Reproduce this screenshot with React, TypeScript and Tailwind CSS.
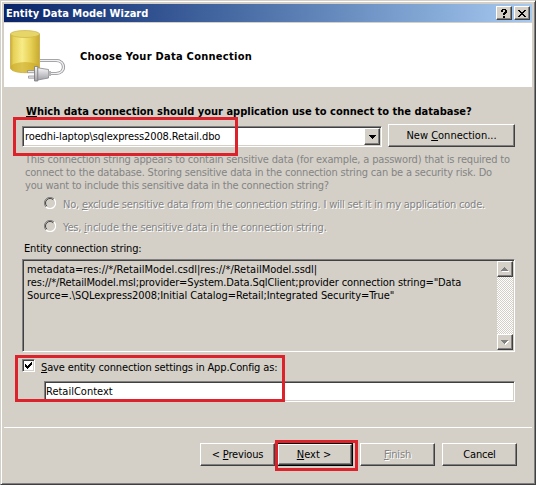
import type { ReactNode } from "react";

const raised =
  "border border-t-white border-l-white border-r-[#404040] border-b-[#404040] shadow-[inset_-1px_-1px_0_#808080] bg-[#d4d0c8]";
const sunken =
  "border border-t-[#808080] border-l-[#808080] border-r-white border-b-white shadow-[inset_1px_1px_0_#404040,inset_-1px_-1px_0_#d4d0c8]";
const etched = "text-[#848484] [text-shadow:1px_1px_0_#fff]";

function Key({ children }: { children: ReactNode }) {
  return <span className="underline decoration-1 underline-offset-1 [text-decoration-skip-ink:none]">{children}</span>;
}

function PushButton({ children, className = "" }: { children: ReactNode; className?: string }) {
  return (
    <button className={`flex h-[23px] shrink-0 items-center justify-center whitespace-nowrap leading-[13px] ${raised} ${className}`}>
      {children}
    </button>
  );
}

function Radio({ children, className = "" }: { children: ReactNode; className?: string }) {
  return (
    <label className="flex h-[13px]">
      <svg width="12" height="12" viewBox="0 0 12 12" fill="none" className="mr-[7px] shrink-0">
        <path d="M10 2A5.5 5.5 0 0 0 2 10" stroke="#808080" />
        <path d="M9.3 2.8A4.5 4.5 0 0 0 2.8 9.2" stroke="#404040" />
        <path d="M10 2A5.5 5.5 0 0 1 2 10" stroke="#fff" strokeWidth="1.2" />
      </svg>
      <span className={`mt-px whitespace-nowrap ${etched} ${className}`}>{children}</span>
    </label>
  );
}

function DatabasePlug() {
  return (
    <svg width="62" height="56" viewBox="0 0 62 56" fill="none">
      <defs>
        <linearGradient id="body" x1="0" x2="1">
          <stop offset="0" stopColor="#c9ac34" />
          <stop offset=".1" stopColor="#e6d056" />
          <stop offset=".4" stopColor="#f8ec88" />
          <stop offset=".7" stopColor="#e6d054" />
          <stop offset="1" stopColor="#c8a930" />
        </linearGradient>
        <linearGradient id="plug" x1="0" y1="0" x2="0" y2="1">
          <stop offset="0" stopColor="#f6f6f8" />
          <stop offset="1" stopColor="#a2a2a8" />
        </linearGradient>
      </defs>
      <path d="M5.5 5v34c0 2.700 6.500 4.700 14.500 4.700S34.500 41.700 34.500 39V5z" fill="url(#body)" stroke="#c2a43a" strokeWidth=".7" />
      <ellipse cx="20" cy="38.300" rx="14.300" ry="5.200" fill="#c9a828" opacity=".6" />
      <ellipse cx="20" cy="5" rx="14.500" ry="3.500" fill="#e6d568" stroke="#cdb345" strokeWidth=".7" />
      <path d="M35 31.500h16c10 0 10 13 0 13h-6" stroke="#8d8d92" strokeWidth="3.200" />
      <path d="M35 31.500h16c10 0 10 13 0 13h-6" stroke="#f1f1f1" strokeWidth="1.600" />
      <path d="M22.500 41.500h7v2.200h-7zM23.500 47h6.500v2.200h-6.500z" fill="#e5e5e8" stroke="#88888d" strokeWidth=".7" />
      <path d="M29.500 37.500h3.300v14.500h-3.300z" fill="url(#plug)" stroke="#77777b" strokeWidth=".8" />
      <path d="M32.800 38.800l10.700 1.700v8.500l-10.700 2z" fill="url(#plug)" stroke="#85858a" strokeWidth=".8" />
      <path d="M43.500 42h2.500v5h-2.500z" fill="#b5b5b8" />
    </svg>
  );
}

export default function App() {
  return (
    <div className="relative h-[485px] w-[536px] overflow-hidden bg-[#d4d0c8] font-['DejaVu_Sans_Condensed','DejaVu_Sans',sans-serif] text-[11px] leading-[13px] text-black [font-stretch:condensed]">
      <div className="flex h-full flex-col border border-t-[#d4d0c8] border-l-[#d4d0c8] border-r-[#404040] border-b-[#404040] p-[3px] shadow-[inset_1px_1px_0_#fff,inset_-1px_-1px_0_#808080]">
        <header className="flex h-[18px] w-[528px] shrink-0 items-center bg-linear-to-r from-[#0a246a] to-[#a6caf0] pr-[2px] pl-[2px]">
          <h1 className="grow whitespace-nowrap font-bold text-white">Entity Data Model Wizard</h1>
          <button className={`mr-[2px] flex h-[14px] w-4 items-center justify-center ${raised}`}>
            <svg width="8" height="9" viewBox="0 0 8 9" shapeRendering="crispEdges">
              <path d="M2 0h4v1h1v3H6v1H5v1H3V4h1V3h1V1H3v2H1V1h1zM3 7h2v2H3z" />
            </svg>
          </button>
          <button className={`flex h-[14px] w-4 items-center justify-center ${raised}`}>
            <svg width="8" height="7" viewBox="0 0 8 7" shapeRendering="crispEdges">
              <path d="M0 0h2v1h1v1h2V1h1V0h2v1H7v1H6v1H5v1h1v1h1v1h1v1H6V6H5V5H3v1H2v1H0V6h1V5h1V4h1V3H2V2H1V1H0z" />
            </svg>
          </button>
        </header>

        <section className="mt-px flex h-16 w-[528px] shrink-0 bg-white pt-[6px] pl-[1px]">
          <DatabasePlug />
          <h2 className="mt-[21px] ml-[13px] whitespace-nowrap font-bold tracking-[0.27px]">Choose Your Data Connection</h2>
        </section>

        <main className="flex h-[339px] shrink-0 flex-col pt-[18px] pl-[18px]">
          <p className="ml-[4px] whitespace-nowrap font-bold"><Key>W</Key>hich data connection should your application use to connect to the database?</p>
          <div className="mt-[6px] flex">
            <div className={`mt-[2px] flex h-[21px] w-[360px] items-center bg-white p-[2px] ${sunken}`}>
              <span className="grow whitespace-nowrap tracking-[-0.12px]">roedhi-laptop\sqlexpress2008.Retail.dbo</span>
              <button className={`-mr-px flex h-[17px] w-4 items-center justify-center ${raised}`}>
                <svg width="7" height="4" shapeRendering="crispEdges"><path d="M0 0h7v1H6v1H5v1H4v1H3V3H2V2H1V1H0z" /></svg>
              </button>
            </div>
            <PushButton className="ml-[6px] w-[127px]"><span>New <Key>C</Key>onnection...</span></PushButton>
          </div>

          <p className="mt-[6px] ml-[3px] whitespace-nowrap text-[#848484]">
            <span className="block tracking-[-0.175px]">This connection string appears to contain sensitive data (for example, a password) that is required to</span>
            <span className="block tracking-[-0.185px]">connect to the database. Storing sensitive data in the connection string can be a security risk. Do</span>
            <span className="block tracking-[-0.21px]">you want to include this sensitive data in the connection string?</span>
          </p>
          <div className="mt-[5px] ml-[22px] flex flex-col gap-[10px]">
            <Radio className="tracking-[-0.205px]">No, <Key>e</Key>xclude sensitive data from the connection string. I will set it in my application code.</Radio>
            <Radio className="tracking-[-0.18px]">Yes, <Key>i</Key>nclude the sensitive data in the connection string.</Radio>
          </div>

          <p className="mt-[9px] ml-[2px] whitespace-nowrap tracking-[-0.16px]">Entity connection string:</p>
          <div className={`mt-[4px] flex h-[93px] w-[493px] justify-between p-px ${sunken}`}>
            <p className="pt-[2px] pl-[3px] whitespace-nowrap">
              <span className="block">metadata=res://*/RetailModel.csdl|res://*/RetailModel.ssdl|</span>
              <span className="block tracking-[-0.13px]">res://*/RetailModel.msl;provider=System.Data.SqlClient;provider connection string="Data</span>
              <span className="block tracking-[-0.07px]">Source=.\SQLexpress2008;Initial Catalog=Retail;Integrated Security=True"</span>
            </p>
            <div className="flex w-4 flex-col justify-between bg-[conic-gradient(#fff_25%,#d4d0c8_0_50%,#fff_0_75%,#d4d0c8_0)] bg-[size:2px_2px]">
              <button className={`flex h-4 w-4 items-center justify-center ${raised}`}>
                <svg width="8" height="5" shapeRendering="crispEdges"><path d="M4 1h1v1h1v1h1v1h1v1H1V4h1V3h1V2h1z" fill="#fff" /><path d="M3 0h1v1h1v1h1v1h1v1H0V3h1V2h1V1h1z" fill="#808080" /></svg>
              </button>
              <button className={`flex h-4 w-4 items-center justify-center ${raised}`}>
                <svg width="8" height="5" shapeRendering="crispEdges"><path d="M1 1h7v1H7v1H6v1H5v1H4V4H3V3H2V2H1z" fill="#fff" /><path d="M0 0h7v1H6v1H5v1H4v1H3V3H2V2H1V1H0z" fill="#808080" /></svg>
              </button>
            </div>
          </div>

          <label className="mt-[7px] flex h-[15px]">
            <span className={`flex h-[13px] w-[13px] items-center justify-center bg-white ${sunken}`}>
              <svg width="7" height="7" shapeRendering="crispEdges"><path d="M0 2h1v1h1v1h1V3h1V2h1V1h1V0h1v3H6v1H5v1H4v1H3v1H2V6H1V5H0z" /></svg>
            </span>
            <span className="mt-[2px] ml-[6px] whitespace-nowrap tracking-[-0.15px]"><Key>S</Key>ave entity connection settings in App.Config as:</span>
          </label>
          <div className={`mt-[7px] ml-[22px] flex h-[21px] w-[471px] items-center bg-white pl-[1px] ${sunken}`}>RetailContext</div>
        </main>

        <footer className="mt-[1px] flex w-[528px] grow justify-end border-t border-white pt-[15px] pr-[15px]">
          <PushButton className="w-[75px]"><span className="tracking-[-0.15px]">&lt; <Key>P</Key>revious</span></PushButton>
          <div className="ml-[2px] h-[23px] w-[76px] border border-black">
            <button className={`flex h-[21px] w-[74px] items-center justify-center whitespace-nowrap pr-[2px] leading-[13px] ${raised}`}><span><Key>N</Key>ext &gt;</span></button>
          </div>
          <PushButton className="ml-[7px] w-[75px]"><span className={`tracking-[-0.15px] ${etched}`}><Key>F</Key>inish</span></PushButton>
          <PushButton className="ml-[7px] w-[75px]"><span className="tracking-[-0.2px]">Cancel</span></PushButton>
        </footer>
      </div>

      <div className="pointer-events-none absolute top-[117px] left-[13px] h-[39px] w-[225px] border-[3px] border-[#dc232c]" />
      <div className="pointer-events-none absolute top-[355px] left-[15px] h-[47px] w-[270px] border-[3px] border-[#dc232c]" />
      <div className="pointer-events-none absolute top-[440px] left-[275px] h-[31px] w-[83px] border-[3px] border-[#dc232c]" />
    </div>
  );
}
